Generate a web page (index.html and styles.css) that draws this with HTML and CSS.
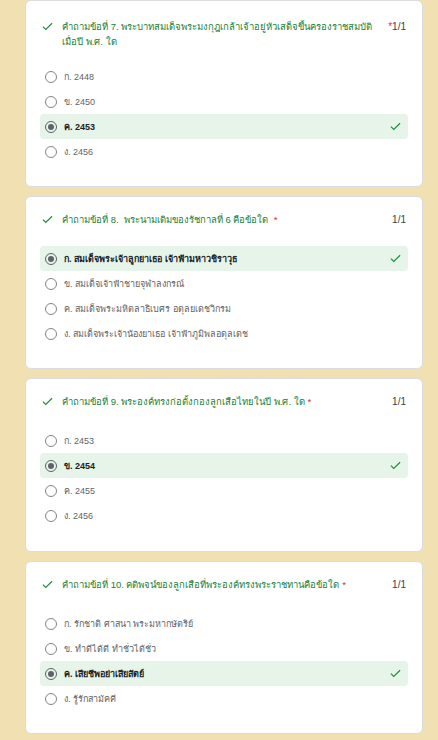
FILE: index.html
```html
<!DOCTYPE html>
<html lang="th">
<head>
<meta charset="utf-8">
<link rel="stylesheet" href="styles.css">
</head>
<body>
<main class="page">

<section class="card card-first">
  <div class="head">
    <svg class="tick" viewBox="0 0 12 9"><path d="M1 4.6 4.1 7.6 11 1" /></svg>
    <div class="title">คำถามข้อที่ 7. พระบาทสมเด็จพระมงกุฎเกล้าเจ้าอยู่หัวเสด็จขึ้นครองราชสมบัติ<br>เมื่อปี พ.ศ. ใด</div>
    <div class="score"><span class="req">*</span>1/1</div>
  </div>
  <div class="opts">
    <div class="opt"><span class="radio"></span><span class="lbl">ก. 2448</span></div>
    <div class="opt"><span class="radio"></span><span class="lbl">ข. 2450</span></div>
    <div class="opt sel"><span class="radio"></span><span class="lbl">ค. 2453</span><svg class="tick ok" viewBox="0 0 12 9"><path d="M1 4.6 4.1 7.6 11 1" /></svg></div>
    <div class="opt"><span class="radio"></span><span class="lbl">ง. 2456</span></div>
  </div>
</section>

<section class="card">
  <div class="head">
    <svg class="tick" viewBox="0 0 12 9"><path d="M1 4.6 4.1 7.6 11 1" /></svg>
    <div class="title">คำถามข้อที่ 8.&nbsp; พระนามเดิมของรัชกาลที่ 6 คือข้อใด &nbsp;<span class="req">*</span></div>
    <div class="score">1/1</div>
  </div>
  <div class="opts">
    <div class="opt sel"><span class="radio"></span><span class="lbl">ก. สมเด็จพระเจ้าลูกยาเธอ เจ้าฟ้ามหาวชิราวุธ</span><svg class="tick ok" viewBox="0 0 12 9"><path d="M1 4.6 4.1 7.6 11 1" /></svg></div>
    <div class="opt"><span class="radio"></span><span class="lbl">ข. สมเด็จเจ้าฟ้าชายจุฬาลงกรณ์</span></div>
    <div class="opt"><span class="radio"></span><span class="lbl">ค. สมเด็จพระมหิตลาธิเบศร อดุลยเดชวิกรม</span></div>
    <div class="opt"><span class="radio"></span><span class="lbl">ง. สมเด็จพระเจ้าน้องยาเธอ เจ้าฟ้าภูมิพลอดุลเดช</span></div>
  </div>
</section>

<section class="card card-third">
  <div class="head">
    <svg class="tick" viewBox="0 0 12 9"><path d="M1 4.6 4.1 7.6 11 1" /></svg>
    <div class="title">คำถามข้อที่ 9. พระองค์ทรงก่อตั้งกองลูกเสือไทยในปี พ.ศ. ใด <span class="req">*</span></div>
    <div class="score">1/1</div>
  </div>
  <div class="opts">
    <div class="opt"><span class="radio"></span><span class="lbl">ก. 2453</span></div>
    <div class="opt sel"><span class="radio"></span><span class="lbl">ข. 2454</span><svg class="tick ok" viewBox="0 0 12 9"><path d="M1 4.6 4.1 7.6 11 1" /></svg></div>
    <div class="opt"><span class="radio"></span><span class="lbl">ค. 2455</span></div>
    <div class="opt"><span class="radio"></span><span class="lbl">ง. 2456</span></div>
  </div>
</section>

<section class="card">
  <div class="head">
    <svg class="tick" viewBox="0 0 12 9"><path d="M1 4.6 4.1 7.6 11 1" /></svg>
    <div class="title">คำถามข้อที่ 10. คติพจน์ของลูกเสือที่พระองค์ทรงพระราชทานคือข้อใด <span class="req">*</span></div>
    <div class="score">1/1</div>
  </div>
  <div class="opts">
    <div class="opt"><span class="radio"></span><span class="lbl">ก. รักชาติ ศาสนา พระมหากษัตริย์</span></div>
    <div class="opt"><span class="radio"></span><span class="lbl">ข. ทำดีได้ดี ทำชั่วได้ชั่ว</span></div>
    <div class="opt sel"><span class="radio"></span><span class="lbl">ค. เสียชีพอย่าเสียสัตย์</span><svg class="tick ok" viewBox="0 0 12 9"><path d="M1 4.6 4.1 7.6 11 1" /></svg></div>
    <div class="opt"><span class="radio"></span><span class="lbl">ง. รู้รักสามัคคี</span></div>
  </div>
</section>

</main>
</body>
</html>
```

FILE: styles.css
```css
html, body {
  margin: 0;
  padding: 0;
}
body {
  background: #f1e0b2;
  font-family: Tahoma, "Liberation Sans", "DejaVu Sans", "Noto Sans", sans-serif;
  font-size: 9px;
  color: #5f6368;
}
.page {
  display: flex;
  flex-direction: column;
  gap: 9px;
  padding: 0 15px 0 25px;
}
.card {
  background: #fff;
  border: 1px solid #dadce0;
  border-radius: 6px;
  padding: 15px 14px 22px 14px;
  height: 173px;
  box-sizing: border-box;
}
.card-first {
  height: 187px;
  padding-top: 18px;
}
.card-third {
  height: 174px;
}
.head {
  display: flex;
  align-items: flex-start;
  padding: 0 2px 0 2px;
  line-height: 15px;
  font-size: 9.5px;
}
.tick {
  width: 11px;
  height: 9px;
  flex: none;
  fill: none;
  stroke: #1e8e3e;
  stroke-width: 1.3;
}
.head .tick {
  margin: 3px 9px 0 0;
}
.title {
  flex: 1;
  color: #188038;
  padding-right: 8px;
}
.score {
  flex: none;
  color: #3c4043;
  font-size: 10px;
}
.req {
  color: #d93025;
}
.opts {
  margin-top: 19px;
  display: flex;
  flex-direction: column;
}
.card-first .opts {
  margin-top: 15px;
}
.opt {
  display: flex;
  align-items: center;
  height: 25px;
  padding: 0 7px 0 5px;
  border-radius: 4px;
}
.opt.sel {
  background: #e6f4ea;
}
.radio {
  width: 10px;
  height: 10px;
  border: 1px solid #80868b;
  border-radius: 50%;
  flex: none;
  display: flex;
  align-items: center;
  justify-content: center;
  margin-right: 7px;
}
.sel .radio {
  border-color: #5f6368;
}
.sel .radio::after {
  content: "";
  width: 6px;
  height: 6px;
  border-radius: 50%;
  background: #5f6368;
}
.lbl {
  flex: 1;
  color: #5f6368;
}
.sel .lbl {
  color: #202124;
  font-weight: bold;
}
.opt .tick.ok {
  margin-left: auto;
}
```
